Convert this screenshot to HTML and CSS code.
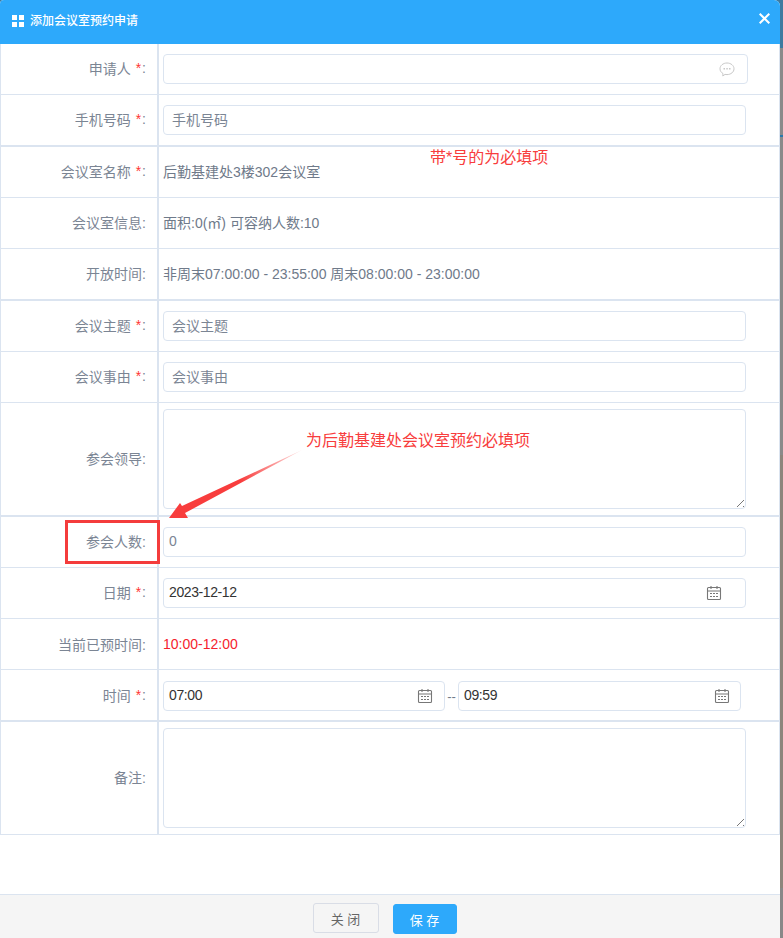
FILE: index.html
```html
<!DOCTYPE html>
<html lang="zh-CN">
<head>
<meta charset="utf-8">
<title>添加会议室预约申请</title>
<link rel="stylesheet" href="styles.css">
</head>
<body>
<div class="dialog">
  <header class="head">
    <span class="head-title">
      <svg class="grid-icon" width="12" height="12" viewBox="0 0 12 12"><path fill="#fff" d="M0 0h5v5H0zM7 0h5v5H7zM0 7h5v5H0zM7 7h5v5H7z"/></svg>
      添加会议室预约申请
    </span>
    <svg class="close-icon" width="11" height="11" viewBox="0 0 11 11"><path stroke="#fff" stroke-width="2" d="M.7.7l9.6 9.6M10.3.7L.7 10.3"/></svg>
  </header>
  <main class="form">
    <div class="row">
      <div class="label">申请人 <em>*</em>:</div>
      <div class="cell"><div class="field field-wide">
        <svg class="chat-icon" width="16" height="15" viewBox="0 0 16 15"><path fill="none" stroke="#c8c8c8" d="M8 1c3.900 0 7 2.600 7 5.800s-3.100 5.800-7 5.800c-.7 0-1.300-.1-2-.2L3.800 14l.2-2.400C2.200 10.500 1 8.800 1 6.800 1 3.600 4.100 1 8 1z"/><path fill="#c8c8c8" d="M4.500 6h1.500v1.500H4.500zM7.300 6h1.500v1.500H7.300zM10 6h1.500v1.500H10z"/></svg>
      </div></div>
    </div>
    <div class="row row-end">
      <div class="label">手机号码 <em>*</em>:</div>
      <div class="cell"><div class="field ph">手机号码</div></div>
    </div>
    <div class="row">
      <div class="label">会议室名称 <em>*</em>:</div>
      <div class="cell text">后勤基建处3楼302会议室</div>
    </div>
    <div class="row">
      <div class="label">会议室信息:</div>
      <div class="cell text">面积:0(㎡) 可容纳人数:10</div>
    </div>
    <div class="row row-end">
      <div class="label">开放时间:</div>
      <div class="cell text">非周末07:00:00 - 23:55:00 周末08:00:00 - 23:00:00</div>
    </div>
    <div class="row">
      <div class="label">会议主题 <em>*</em>:</div>
      <div class="cell"><div class="field ph">会议主题</div></div>
    </div>
    <div class="row">
      <div class="label">会议事由 <em>*</em>:</div>
      <div class="cell"><div class="field ph">会议事由</div></div>
    </div>
    <div class="row row-tall row-end">
      <div class="label">参会领导:</div>
      <div class="cell"><div class="area"></div></div>
    </div>
    <div class="row">
      <div class="label">参会人数:</div>
      <div class="cell"><div class="field value muted">0</div></div>
    </div>
    <div class="row">
      <div class="label">日期 <em>*</em>:</div>
      <div class="cell"><div class="field value">2023-12-12
        <svg class="cal" width="16" height="16" viewBox="0 0 16 16"><use href="#cal"/></svg></div></div>
    </div>
    <div class="row row-flat">
      <div class="label">当前已预时间:</div>
      <div class="cell booked">10:00-12:00</div>
    </div>
    <div class="row row-end row-flat">
      <div class="label">时间 <em>*</em>:</div>
      <div class="cell time-cell">
        <div class="field value time-a">07:00
          <svg class="cal" width="16" height="16" viewBox="0 0 16 16"><use href="#cal"/></svg></div>
        <span class="dash">--</span>
        <div class="field value time-b">09:59
          <svg class="cal" width="16" height="16" viewBox="0 0 16 16"><use href="#cal"/></svg></div>
      </div>
    </div>
    <div class="row row-tall">
      <div class="label">备注:</div>
      <div class="cell"><div class="area"></div></div>
    </div>
  </main>
  <footer class="foot">
    <button class="btn btn-close">关 闭</button>
    <button class="btn btn-save">保 存</button>
  </footer>

  <div class="note note-a">带*号的为必填项</div>
  <div class="note note-b">为后勤基建处会议室预约必填项</div>
  <div class="mark"></div>
  <svg class="arrow" width="155" height="90" viewBox="150 440 155 90">
    <defs><linearGradient id="fade" gradientUnits="userSpaceOnUse" x1="302" y1="450" x2="240" y2="480"><stop offset="0" stop-color="#f83d3d" stop-opacity=".15"/><stop offset="1" stop-color="#f83d3d"/></linearGradient></defs>
    <path fill="url(#fade)" d="M302 450L182 506l-2-3-11 15h19l-3-5z"/>
  </svg>
</div>
<svg class="defs" width="0" height="0"><defs>
  <g id="cal"><path fill="none" stroke="#777" stroke-width="1.100" d="M2.500 2.500h11a1 1 0 0 1 1 1v10a1 1 0 0 1-1 1h-11a1 1 0 0 1-1-1v-10a1 1 0 0 1 1-1zM1.500 6h13M5 1v3M11 1v3"/><path fill="#777" d="M4 8h2v1H4zM7 8h2v1H7zM10 8h2v1h-2zM4 11h2v1H4zM7 11h2v1H7zM10 11h2v1h-2z"/></g>
</defs></svg>
</body>
</html>
```

FILE: styles.css
```css
* { box-sizing: border-box; }
html, body { margin: 0; height: 100%; }
body {
  background: linear-gradient(180deg, #3d7ba0 0 48px, #8a8a8a 48px 135px, #2b78ad 135px 137px, #8a8a8a 137px 455px, #8d857c 455px 888px, #888 888px);
  font-family: "Liberation Sans", "Noto Sans CJK SC", sans-serif;
  font-size: 14px;
  color: #6f7a8a;
  overflow: hidden;
}
.dialog {
  position: relative;
  width: 780px;
  height: 938px;
  background: #fff;
  display: flex;
  flex-direction: column;
  border-radius: 4px 6px 0 0;
  overflow: hidden;
}
.head {
  flex: none;
  height: 44px;
  background: #2da9fb;
  color: #fff;
  display: flex;
  align-items: flex-start;
  justify-content: space-between;
  padding: 14px 10px 0 12px;
  font-size: 12px;
}
.head-title { display: flex; align-items: center; gap: 6px; line-height: 14px; font-weight: 500; }
.close-icon { margin-top: -1px; }
.form { flex: 1; }
.row {
  display: flex;
  height: 51px;
  border-bottom: 1px solid #dbe4f0;
  border-left: 1px solid #dbe4f0;
  border-right: 1px solid #dbe4f0;
}
.row-tall { height: 114px; }
.row-end { height: 52px; border-bottom-width: 2px; }
.row-tall.row-end { height: 114px; }
.row:last-child { height: 113px; }
.label {
  flex: none;
  width: 158px;
  border-right: 2px solid #dbe4f0;
  padding: 0 11px 2px 0;
  display: flex;
  align-items: center;
  justify-content: flex-end;
  white-space: pre;
  color: #7b8594;
}
.row-flat .label { padding-bottom: 0; }
.label em { color: #f33; font-style: normal; margin: 0 1px; }
.cell {
  flex: 1;
  padding: 0 33px 0 4px;
  display: flex;
  align-items: center;
  min-width: 0;
}
.text { color: #6f7a8a; padding-bottom: 2px; }
.booked { color: #f5222d; }
.field {
  flex: 1;
  height: 30px;
  border: 1px solid #dbe4f0;
  border-radius: 4px;
  display: flex;
  align-items: center;
  justify-content: space-between;
  padding: 0 8px 2px;
  background: #fff;
}
.field-wide { margin-right: -2px; }
.chat-icon { margin: 2px 4px 0 auto; }
.ph { color: #7b8594; }
.value {
  font-size: 14px;
  letter-spacing: -.4px;
  color: #333;
  padding: 0 5px 2px;
}
.muted { color: #7b8594; }
.cal { margin-right: 18px; margin-top: 2px; }
.area {
  flex: 1;
  height: 100px;
  border: 1px solid #dbe4f0;
  border-radius: 4px;
  position: relative;
}
.area::after {
  content: "";
  position: absolute;
  right: 1px;
  bottom: 1px;
  width: 8px;
  height: 8px;
  background: repeating-linear-gradient(135deg, transparent 0 2px, #777 2px 3px, transparent 3px 4px);
  clip-path: polygon(100% 0, 100% 100%, 0 100%);
}
.time-cell { padding: 2px 38px 0 4px; }
.time-a { flex: none; width: 282px; }
.time-b { flex: 1; }
.time-a .cal { margin-right: 6px; }
.time-b .cal { margin-right: 5px; }
.dash { width: 13px; text-align: center; color: #6f7a8a; font-size: 13px; }
.foot {
  flex: none;
  height: 44px;
  background: #f5f5f5;
  border-top: 1px solid #dbe4f0;
  display: flex;
  justify-content: center;
  align-items: flex-start;
  gap: 14px;
  padding: 9px 11px 0 0;
}
.btn {
  font-family: "Liberation Sans", "Noto Sans CJK SC", sans-serif;
  font-size: 13px;
  height: 30px;
  width: 66px;
  border-radius: 3px;
  padding: 0;
}
.btn-close { background: #f5f5f5; border: 1px solid #d9dde6; color: #666; margin-top: -1px; }
.btn-save { background: #2da9fb; border: 1px solid #2da9fb; color: #fff; width: 64px; }
.note {
  position: absolute;
  color: #f83d3d;
  font-size: 16px;
  line-height: 20px;
  white-space: nowrap;
}
.note-a { left: 430px; top: 148px; }
.note-b { left: 306px; top: 431px; }
.mark { position: absolute; left: 65px; top: 520px; width: 95px; height: 44px; border: 3px solid #f43c3c; }
.arrow { position: absolute; left: 150px; top: 440px; }
.defs { position: absolute; }
```
